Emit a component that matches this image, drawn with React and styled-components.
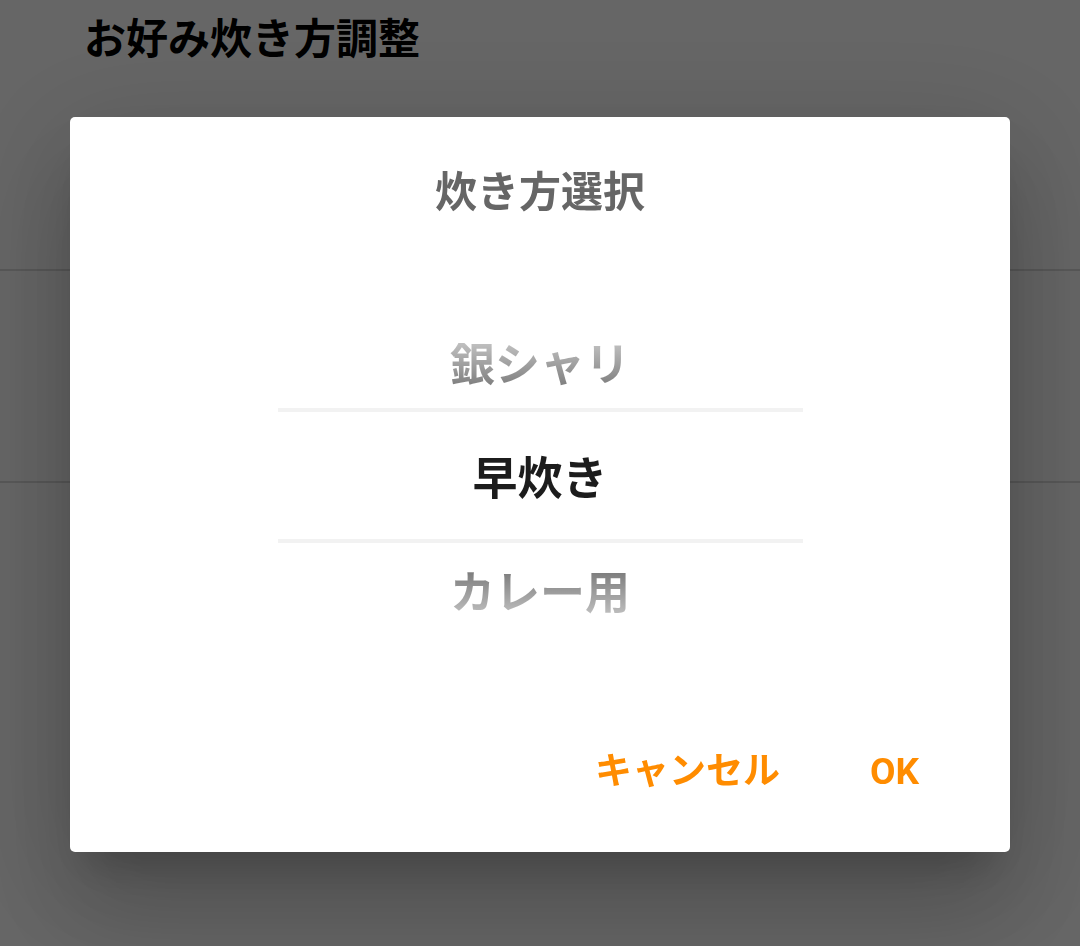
import React from "react";
import styled, { createGlobalStyle } from "styled-components";

const Global = createGlobalStyle`
  html, body {
    margin: 0;
    padding: 0;
    background: #ffffff;
    font-family: Roboto, "Noto Sans CJK JP", "Noto Sans", sans-serif;
  }
  #root { min-height: 946px; }
`;

const Page = styled.div`
  width: 1080px;
  height: 946px;
  background: #ffffff;
  display: flex;
  flex-direction: column;
`;

const Header = styled.header`
  height: 271px;
  padding: 10px 0 0 84px;
  box-sizing: border-box;
  border-bottom: 2px solid #dcdcdc;
`;

const PageTitle = styled.h1`
  margin: 0;
  font-size: 42px;
  line-height: 60px;
  font-weight: 700;
  color: #000;
`;

const Row = styled.div`
  height: 210px;
  border-bottom: 2px solid #dcdcdc;
`;

const Overlay = styled.div`
  position: fixed;
  inset: 0;
  background: rgba(0, 0, 0, 0.6);
  display: flex;
  justify-content: center;
  align-items: flex-start;
  padding-top: 117px;
  box-sizing: border-box;
`;

const Dialog = styled.div`
  width: 940px;
  height: 735px;
  background: #fff;
  border-radius: 5px;
  box-sizing: border-box;
  padding: 46px 0 51px;
  display: flex;
  flex-direction: column;
  box-shadow: 0 62px 99px 8px rgba(0, 0, 0, 0.14),
    0 23px 120px 21px rgba(0, 0, 0, 0.12),
    0 29px 39px -18px rgba(0, 0, 0, 0.2);
`;

const DialogTitle = styled.h2`
  margin: 0;
  text-align: center;
  font-size: 42px;
  line-height: 60px;
  font-weight: 700;
  color: #666666;
`;

const Picker = styled.div`
  position: relative;
  width: 525px;
  margin: 85px auto 0;
  display: flex;
  flex-direction: column;
`;

const Divider = styled.div`
  position: absolute;
  left: 0;
  right: 0;
  height: 4px;
  background: #f2f2f2;
  top: ${(p) => p.$top}px;
`;

const Item = styled.div`
  height: 114px;
  display: flex;
  align-items: center;
  justify-content: center;
  font-size: 45px;
  font-weight: 700;
  line-height: 1;
`;

const ItemText = styled.span`
  ${(p) =>
    p.$fade
      ? `
    background: linear-gradient(${p.$fade === "up" ? "to bottom" : "to top"}, #c0c0c0 0%, #7c7c7c 100%);
    -webkit-background-clip: text;
    background-clip: text;
    color: transparent;
  `
      : `color: #1c1c1c;`}
`;

const Actions = styled.div`
  margin-top: 92px;
  display: flex;
  justify-content: flex-end;
  padding-right: 46px;
`;

const ActionButton = styled.button`
  border: none;
  background: transparent;
  padding: 0 45px;
  font-family: inherit;
  font-size: 37px;
  line-height: 60px;
  font-weight: 700;
  color: #ff8c00;
  cursor: pointer;
`;

const options = [
  { label: "銀シャリ", fade: "up" },
  { label: "早炊き", fade: null },
  { label: "カレー用", fade: "down" },
];

export default function App() {
  return (
    <>
      <Global />
      <Page>
        <Header>
          <PageTitle>お好み炊き方調整</PageTitle>
        </Header>
        <Row />
      </Page>
      <Overlay>
        <Dialog>
          <DialogTitle>炊き方選択</DialogTitle>
          <Picker>
            {options.map((o) => (
              <Item key={o.label}>
                <ItemText $fade={o.fade}>{o.label}</ItemText>
              </Item>
            ))}
            <Divider $top={100} />
            <Divider $top={231} />
          </Picker>
          <Actions>
            <ActionButton>キャンセル</ActionButton>
            <ActionButton>OK</ActionButton>
          </Actions>
        </Dialog>
      </Overlay>
    </>
  );
}
